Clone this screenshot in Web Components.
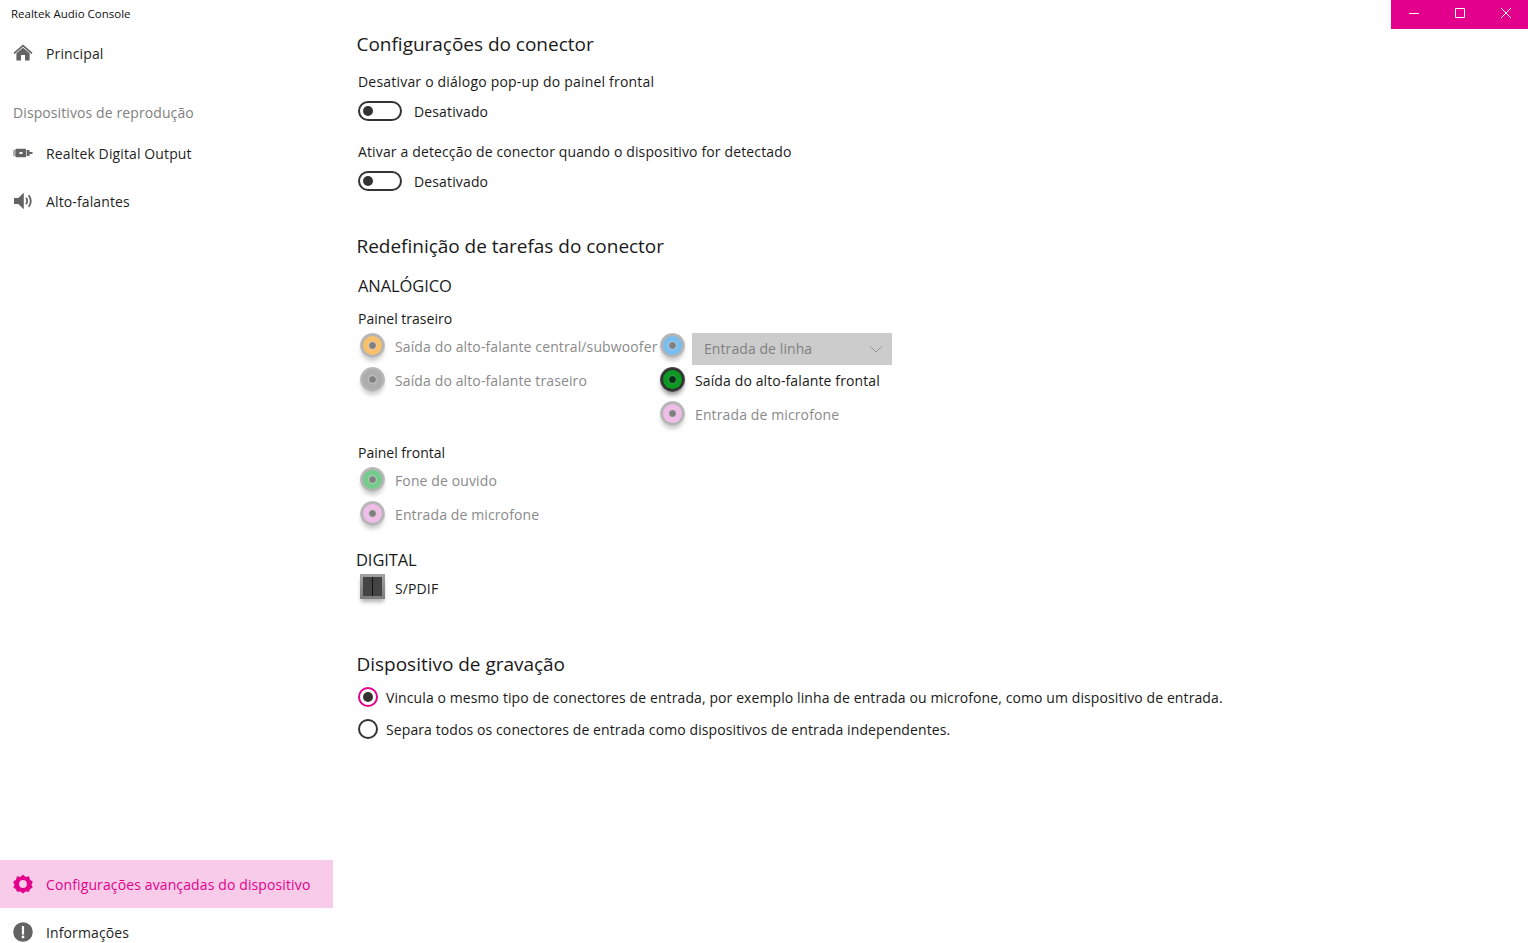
<!DOCTYPE html>
<html lang="pt">
<head>
<meta charset="utf-8">
<title>Realtek Audio Console</title>
<style>
  html, body { margin: 0; height: 943px; overflow: hidden; background: #fff; }
  body { font-family: "Open Sans", "Noto Sans", sans-serif; color: #1a1a1a; }
</style>
</head>
<body>
<audio-app></audio-app>

<script>
const ICONS = {
  home: `<path d="M10 1.5 0.5 9.7 1.6 10.9 10 3.7 18.4 10.9 19.5 9.7Z"/><path d="M3.4 10.3 10 4.8 16.6 10.3V17.5H12V12H8V17.5H3.4Z"/>`,
  digital: `<path d="M0.5 7h1v6h-1z"/><path fill-rule="evenodd" d="M3.5 5.8h8.5q1.2 0 1.2 1.2v6q0 1.2-1.2 1.2H3.5q-1.2 0-1.2-1.2V7q0-1.2 1.2-1.2ZM6.5 9v2h3V9Z"/><path d="M13.8 7h2.7v6h-2.7zM16.5 9h3v2h-3z"/>`,
  speaker: `<path d="M1 7h4.2L10.8 1.8V18.2L5.2 13H1Z"/><path fill="none" stroke="currentColor" stroke-width="1.8" d="M13 6.8q2.4 3.2 0 6.4M15.6 4.2q4.4 5.8 0 11.6"/>`,
  gear: `<path fill-rule="evenodd" d="M10 0.5 12.6 2.9 16 2.3 17 5.7 19.8 7.7 18.4 10.9 19.8 13.2 17 15.2 16 17.7 12.6 17.6 10 19.5 7.4 17.6 4 17.7 3 15.2 0.2 13.2 1.6 10.9 0.2 7.7 3 5.7 4 2.3 7.4 2.9ZM10 6.1a3.9 3.9 0 1 0 0 7.8 3.9 3.9 0 0 0 0-7.8Z"/>`,
  info: `<path fill-rule="evenodd" d="M10 0.2a9.8 9.8 0 1 1 0 19.6 9.8 9.8 0 0 1 0-19.6ZM8.9 4v8.4h2.2V4ZM10 13.6a1.4 1.4 0 1 0 0 2.8 1.4 1.4 0 0 0 0-2.8Z"/>`
};

class NavItem extends HTMLElement {
  connectedCallback() {
    const icon = ICONS[this.getAttribute("icon")];
    this.attachShadow({ mode: "open" }).innerHTML = `
      <style>
        :host { display: flex; align-items: center; height: 48px; color: #1f1f1f; font-size: 14px; letter-spacing: 0.12px; }
        :host([active]) { background: #f8cce8; color: #e3008c; }
        svg { width: 20px; height: 20px; margin-left: 13px; margin-right: 13px; fill: #636363; color: #636363; flex: none; }
        :host([active]) svg { fill: #e3008c; }
      </style>
      <svg viewBox="0 0 20 20">${icon}</svg>
      <slot></slot>`;
  }
}

class WindowControls extends HTMLElement {
  connectedCallback() {
    this.attachShadow({ mode: "open" }).innerHTML = `
      <style>
        :host { display: flex; position: absolute; top: 0; right: 0; width: 137px; background: #e3008c; height: 29px; }
        span { flex: none; width: 46px; box-sizing: border-box; padding: 8px 0 0 18px; }
        svg { display: block; width: 10px; height: 10px; fill: none; stroke: #fff; stroke-width: 1; }
      </style>
      <span><svg viewBox="0 0 10 10"><path d="M0 5.5h10"/></svg></span>
      <span><svg viewBox="0 0 10 10"><path d="M0.5 0.5h9v9h-9z"/></svg></span>
      <span><svg viewBox="0 0 10 10"><path d="M0 0l10 10M10 0l-10 10"/></svg></span>`;
  }
}

class ToggleRow extends HTMLElement {
  connectedCallback() {
    this.attachShadow({ mode: "open" }).innerHTML = `
      <style>
        :host { display: block; font-size: 14px; letter-spacing: 0.14px; color: #1a1a1a; margin-left: 1px; }
        .label { height: 20px; line-height: 20px; }
        .row { display: flex; align-items: center; margin-top: 9px; height: 20px; }
        .track { box-sizing: border-box; width: 44px; height: 20px; border: 2px solid #333; border-radius: 10px; display: flex; align-items: center; padding-left: 3px; margin-right: 12px; }
        .knob { width: 10px; height: 10px; border-radius: 50%; background: #333; }
      </style>
      <div class="label"><slot name="label"></slot></div>
      <div class="row"><div class="track"><div class="knob"></div></div><slot></slot></div>`;
  }
}

class JackIcon extends HTMLElement {
  connectedCallback() {
    const color = this.getAttribute("color");
    this.attachShadow({ mode: "open" }).innerHTML = `
      <style>
        :host { display: block; width: 30px; height: 30px; flex: none; }
        .ring { box-sizing: border-box; width: 25px; height: 25px; margin: 1px 0 0 2px; border-radius: 50%; padding: 3px;
          background: radial-gradient(circle, #b4b4b4 60%, #dedede 100%); box-shadow: 0 4px 4px -1px rgba(0,0,0,.2); filter: blur(.5px); }
        .color { box-sizing: border-box; width: 19px; height: 19px; border-radius: 50%; background: ${color}; display: flex; align-items: center; justify-content: center; }
        .dot { width: 9px; height: 9px; border-radius: 50%; background: radial-gradient(circle, #808080 45%, rgba(205,205,205,.6) 60%); }
        :host([on]) .ring { background: radial-gradient(circle, #303030 60%, #a8a8a8 100%); box-shadow: 0 4px 4px -1px rgba(0,0,0,.4); }
        :host([on]) .dot { background: radial-gradient(circle, #06301a 45%, #3a8c48 60%); }
      </style>
      <div class="ring"><div class="color"><div class="dot"></div></div></div>`;
  }
}

class JackRow extends HTMLElement {
  connectedCallback() {
    const on = this.hasAttribute("on");
    this.attachShadow({ mode: "open" }).innerHTML = `
      <style>
        :host { display: flex; align-items: center; height: 34px; font-size: 14px; letter-spacing: 0.12px; color: ${on ? "#1a1a1a" : "#8a8a8a"}; white-space: nowrap; }
        jack-icon { margin-right: 7px; }
        .text { margin-bottom: 2px; }
      </style>
      <jack-icon color="${this.getAttribute("color")}" ${on ? "on" : ""}></jack-icon>
      <div class="text"><slot></slot></div>`;
  }
}

class JackSelect extends HTMLElement {
  connectedCallback() {
    this.attachShadow({ mode: "open" }).innerHTML = `
      <style>
        :host { display: flex; align-items: center; justify-content: space-between; box-sizing: border-box; width: 200px; height: 32px; margin: 4px 0 0 4px; padding: 0 10px 2px 12px; background: #cccccc; color: #808080; font-size: 14px; letter-spacing: 0.08px; }
        svg { width: 12px; height: 7px; fill: none; stroke: #949494; stroke-width: 1; margin-top: 2px; }
      </style>
      <slot></slot>
      <svg viewBox="0 0 12 7"><path d="M0.5 0.5 6 6 11.5 0.5"/></svg>`;
  }
}

class SpdifIcon extends HTMLElement {
  connectedCallback() {
    this.attachShadow({ mode: "open" }).innerHTML = `
      <style>
        :host { display: block; width: 30px; height: 30px; flex: none; }
        .box { box-sizing: border-box; width: 25px; height: 25px; margin: 0 0 0 2px; padding: 3px; background: linear-gradient(#a2a2a2, #7c7c7c); box-shadow: 0 4px 4px -1px rgba(0,0,0,.3); filter: blur(.4px); }
        .port { height: 100%; background: linear-gradient(90deg, #444 0 47%, #111 47% 55%, #444 55%); }
      </style>
      <div class="box"><div class="port"></div></div>`;
  }
}

class RadioRow extends HTMLElement {
  connectedCallback() {
    this.attachShadow({ mode: "open" }).innerHTML = `
      <style>
        :host { display: flex; align-items: center; height: 32px; font-size: 14px; letter-spacing: 0.1px; color: #1a1a1a; white-space: nowrap; }
        .dot { box-sizing: border-box; width: 20px; height: 20px; margin: 0 8px 0 1px; border: 2px solid #333; border-radius: 50%; display: flex; align-items: center; justify-content: center; }
        :host([checked]) .dot { border-color: #e3008c; }
        :host([checked]) .dot::after { content: ""; width: 10px; height: 10px; border-radius: 50%; background: #333; }
      </style>
      <div class="dot"></div>
      <slot></slot>`;
  }
}

class AudioApp extends HTMLElement {
  connectedCallback() {
    this.attachShadow({ mode: "open" }).innerHTML = `
      <style>
        :host { display: flex; position: relative; width: 1528px; height: 956px; }
        .side { width: 333px; flex: none; display: flex; flex-direction: column; }
        .title { height: 29px; line-height: 28px; font-size: 11.5px; padding-left: 11px; color: #111; letter-spacing: 0; }
        .group { height: 52px; line-height: 72px; padding-left: 13px; color: #808080; font-size: 14px; letter-spacing: 0.1px; }
        .spacer { flex: 1; }
        main { flex: 1; padding: 30px 0 0 24px; }
        h2 { margin: 0 0 0 -0.5px; font-weight: 400; font-size: 19px; line-height: 28px; height: 28px; color: #1a1a1a; letter-spacing: -0.02px; }
        h3 { margin: 0; font-weight: 400; font-size: 16.5px; line-height: 24px; height: 24px; color: #1a1a1a; letter-spacing: -0.1px; }
        .lbl { font-size: 14px; letter-spacing: 0; height: 20px; line-height: 20px; margin-left: 1px; }
        .jacks { display: flex; margin-left: 1px; }
        .col { width: 300px; }
        .selrow { display: flex; align-items: center; height: 34px; }
        .spdif { margin-left: 1px; color: #1a1a1a; font-size: 14px; letter-spacing: 0.12px; }
        .spdif span { margin-bottom: 2px; }
      </style>
      <nav class="side">
        <div class="title">Realtek Audio Console</div>
        <nav-item icon="home">Principal</nav-item>
        <div class="group">Dispositivos de reprodução</div>
        <nav-item icon="digital">Realtek Digital Output</nav-item>
        <nav-item icon="speaker">Alto-falantes</nav-item>
        <div class="spacer"></div>
        <nav-item icon="gear" active>Configurações avançadas do dispositivo</nav-item>
        <nav-item icon="info">Informações</nav-item>
      </nav>
      <main>
        <h2>Configurações do conector</h2>
        <toggle-row style="margin-top:14px"><span slot="label" style="letter-spacing:.2px">Desativar o diálogo pop-up do painel frontal</span>Desativado</toggle-row>
        <toggle-row style="margin-top:21px"><span slot="label" style="letter-spacing:.14px">Ativar a detecção de conector quando o dispositivo for detectado</span>Desativado</toggle-row>
        <h2 style="margin-top:41px">Redefinição de tarefas do conector</h2>
        <h3 style="margin:14px 0 0 1px">ANALÓGICO</h3>
        <div class="lbl" style="margin-top:11px">Painel traseiro</div>
        <div class="jacks" style="margin-top:1px">
          <div class="col">
            <jack-row color="#f8c06c">Saída do alto-falante central/subwoofer</jack-row>
            <jack-row color="#adadad">Saída do alto-falante traseiro</jack-row>
          </div>
          <div class="col">
            <div class="selrow"><jack-icon color="#78bef0"></jack-icon><jack-select>Entrada de linha</jack-select></div>
            <jack-row color="#0a9a22" on>Saída do alto-falante frontal</jack-row>
            <jack-row color="#f0bce8">Entrada de microfone</jack-row>
          </div>
        </div>
        <div class="lbl" style="margin-top:11px">Painel frontal</div>
        <div class="jacks" style="margin-top:1px">
          <div class="col">
            <jack-row color="#74cc8c">Fone de ouvido</jack-row>
            <jack-row color="#f0bce8">Entrada de microfone</jack-row>
          </div>
        </div>
        <h3 style="margin:16px 0 0 -1px">DIGITAL</h3>
        <div class="selrow spdif"><spdif-icon style="margin-right:7px"></spdif-icon><span>S/PDIF</span></div>
        <h2 style="margin-top:44px">Dispositivo de gravação</h2>
        <radio-row checked style="margin-top:3px">Vincula o mesmo tipo de conectores de entrada, por exemplo linha de entrada ou microfone, como um dispositivo de entrada.</radio-row>
        <radio-row>Separa todos os conectores de entrada como dispositivos de entrada independentes.</radio-row>
      </main>
      <window-controls></window-controls>`;
  }
}

customElements.define("nav-item", NavItem);
customElements.define("window-controls", WindowControls);
customElements.define("toggle-row", ToggleRow);
customElements.define("jack-icon", JackIcon);
customElements.define("jack-row", JackRow);
customElements.define("jack-select", JackSelect);
customElements.define("spdif-icon", SpdifIcon);
customElements.define("radio-row", RadioRow);
customElements.define("audio-app", AudioApp);
</script>
</body>
</html>
